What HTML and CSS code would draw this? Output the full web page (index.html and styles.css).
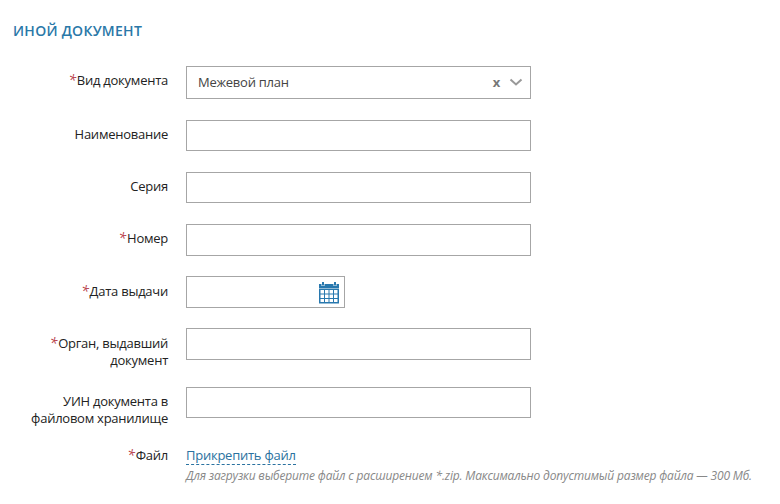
FILE: index.html
```html
<!DOCTYPE html>
<html lang="ru">
<head>
<meta charset="utf-8">
<title>Иной документ</title>
<link rel="stylesheet" href="styles.css">
</head>
<body>
<form class="form">
  <h1 class="title">ИНОЙ ДОКУМЕНТ</h1>
  <div class="row first"><div class="label"><i>*</i>Вид документа</div>
    <div class="field select"><span class="value">Межевой план</span><span class="clear">x</span><svg class="chevron" width="14" height="9" viewBox="0 0 14 9"><path d="M1.500 1.500 7 6.500l5.500-5" fill="none" stroke="#999" stroke-width="2"/></svg></div></div>
  <div class="row"><div class="label">Наименование</div><div class="field"></div></div>
  <div class="row"><div class="label">Серия</div><div class="field"></div></div>
  <div class="row"><div class="label"><i>*</i>Номер</div><div class="field high"></div></div>
  <div class="row"><div class="label low"><i>*</i>Дата выдачи</div>
    <div class="field date"><svg width="20" height="22" viewBox="0 0 20 22"><path fill="#2878ae" d="M0 2h2.500v2h3V2h9v2h3V2H20v4.500H0zM3 0h2v3.500H3zM15 0h2v3.500h-2z"/><path fill="#2878ae" d="M0 7h20v14.500H0z"/><path fill="#fff" d="M1.500 8h3.500v3.500H1.500zM6 8h3.500v3.500H6zM10.500 8H14v3.500h-3.500zM15 8h3.500v3.500H15zM1.500 12.500h3.500v3.500H1.500zM6 12.500h3.500v3.500H6zM10.500 12.500H14v3.500h-3.500zM15 12.500h3.500v3.500H15zM1.500 17h3.500v3H1.500zM6 17h3.500v3H6zM10.500 17H14v3h-3.500zM15 17h3.500v3H15z"/></svg></div></div>
  <div class="row tall"><div class="label low"><i>*</i>Орган, выдавший<br>документ</div><div class="field high"></div></div>
  <div class="row tall uin"><div class="label">УИН документа в<br>файловом хранилище</div><div class="field"></div></div>
  <div class="row file"><div class="label"><i>*</i>Файл</div>
    <div class="upload"><a class="link">Прикрепить файл</a><p class="hint">Для загрузки выберите файл с расширением *.zip. Максимально допустимый размер файла — 300 Мб.</p></div></div>
</form>
</body>
</html>
```
FILE: styles.css
```css
* { box-sizing: border-box; }
body { margin: 0; background: #fff; color: #222; font: 13px/17px "Open Sans", "Noto Sans", sans-serif; letter-spacing: -0.25px; }
.form { padding: 21px 0 0 13px; }
.title { margin: 0 0 25px; font-size: 14px; line-height: 20px; font-weight: 600; letter-spacing: 0.27px; color: #2a78a8; }
.row { display: flex; align-items: flex-start; height: 52px; }
.first { height: 54px; }
.label { width: 155px; margin-right: 18px; padding-top: 6px; text-align: right; white-space: nowrap; }
.low { padding-top: 7px; }
.label i { color: #b8404a; font-size: 14px; line-height: 1; margin-right: 1px; }
.field { display: flex; align-items: center; width: 345px; height: 31px; border: 1px solid #a6a6a6; }
.high { height: 32px; }
.select { height: 33px; padding: 0 7px 0 11px; }
.value { flex: 1; color: #444; }
.clear { font-weight: 700; font-size: 13px; color: #777; margin: -1px 9px 0 0; }
.date { width: 159px; height: 32px; justify-content: flex-end; padding: 1px 5px 0 0; }
.tall { height: 59px; }
.uin { height: 60px; }
.file .label { padding-top: 0; }
.upload { white-space: nowrap; }
.link { display: inline-block; color: #2a72a0; border-bottom: 1px dashed #2a72a0; }
.hint { margin: 2px 0 0; font-size: 12px; letter-spacing: -0.165px; font-style: italic; color: #888; }
```
